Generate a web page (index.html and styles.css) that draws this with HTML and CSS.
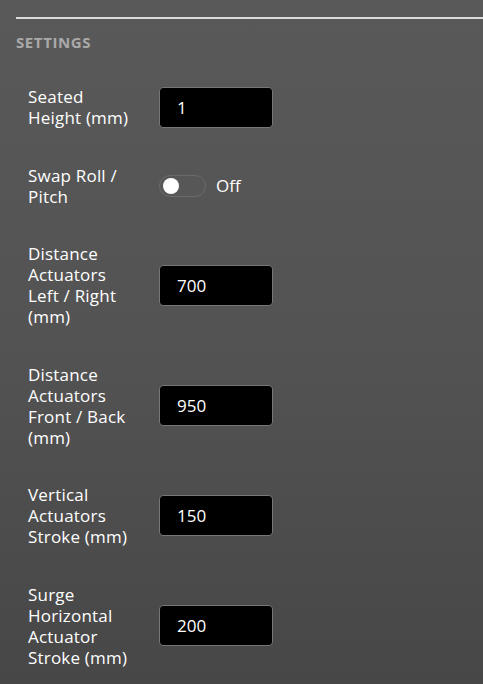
FILE: index.html
```html
<!DOCTYPE html>
<html>
<head>
<meta charset="utf-8">
<link rel="stylesheet" href="styles.css">
</head>
<body>
<div class="panel">
  <div class="rule"></div>
  <h2 class="title">SETTINGS</h2>
  <div class="rows">
    <div class="row">
      <div class="label">Seated Height (mm)</div>
      <div class="field">1</div>
    </div>
    <div class="row">
      <div class="label">Swap Roll / Pitch</div>
      <div class="toggle-wrap">
        <span class="toggle"><span class="knob"></span></span>
        <span class="toggle-text">Off</span>
      </div>
    </div>
    <div class="row">
      <div class="label">Distance Actuators Left / Right (mm)</div>
      <div class="field">700</div>
    </div>
    <div class="row">
      <div class="label">Distance Actuators Front / Back (mm)</div>
      <div class="field">950</div>
    </div>
    <div class="row">
      <div class="label">Vertical Actuators Stroke (mm)</div>
      <div class="field">150</div>
    </div>
    <div class="row">
      <div class="label">Surge Horizontal Actuator Stroke (mm)</div>
      <div class="field">200</div>
    </div>
  </div>
</div>
</body>
</html>
```

FILE: styles.css
```css
html, body {
  margin: 0;
  padding: 0;
  height: 100%;
}
body {
  background: linear-gradient(to bottom, #595959 0%, #535353 50%, #474747 100%);
  font-family: "Open Sans", "Lato", sans-serif;
  color: #ffffff;
  overflow: hidden;
}
.panel {
  padding: 17px 0 0 16px;
}
.rule {
  height: 2px;
  background: #dcdcdc;
}
.title {
  margin: 0;
  padding-top: 14px;
  font-size: 15px;
  line-height: 18px;
  font-weight: 700;
  color: #a9a9a9;
  letter-spacing: 0.6px;
}
.rows {
  display: flex;
  flex-direction: column;
  gap: 36.5px;
  padding: 35px 0 0 12px;
}
.row {
  display: grid;
  grid-template-columns: 106px auto;
  column-gap: 25px;
  align-items: center;
}
.label {
  font-size: 17px;
  line-height: 21px;
  letter-spacing: 0.2px;
  color: #ffffff;
}
.field {
  width: 112px;
  height: 39px;
  box-sizing: content-box;
  background: #000;
  border: 1px solid #777777;
  border-radius: 4px;
  font-size: 17px;
  line-height: 39px;
  text-indent: 17px;
  color: #fff;
}
.toggle-wrap {
  display: flex;
  align-items: center;
  gap: 10px;
}
.toggle {
  display: flex;
  align-items: center;
  width: 47px;
  height: 22px;
  border: 1px solid #6a6a6a;
  background: #575757;
  border-radius: 11px;
  padding-left: 3px;
  box-sizing: border-box;
}
.knob {
  width: 16px;
  height: 16px;
  border-radius: 50%;
  background: #fff;
}
.toggle-text {
  font-size: 17px;
  line-height: 21px;
}
```
